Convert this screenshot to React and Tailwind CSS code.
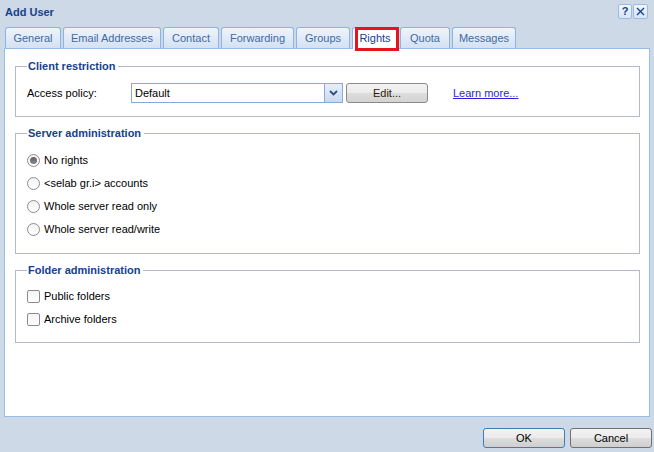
import React from "react";

function Radio({ checked }) {
  return (
    <span className="w-[13px] h-[13px] rounded-full border border-[#8c8c8c] bg-gradient-to-b from-[#f2f2f2] to-[#ffffff] flex items-center justify-center shrink-0">
      {checked && <span className="w-[7px] h-[7px] rounded-full bg-gradient-to-b from-[#5f5f5f] to-[#8a8a8a]" />}
    </span>
  );
}

function Check() {
  return <span className="w-[13px] h-[13px] rounded-[2px] border border-[#8c8c8c] bg-gradient-to-b from-[#f4f4f4] to-white shrink-0" />;
}

function Fieldset({ title, children, className }) {
  return (
    <fieldset className={"border border-[#b5b8c8] pl-[11px] pr-[10px] " + className}>
      <legend className="pl-[1px] pr-[3px] leading-[13px] font-bold text-[#15428b]">{title}</legend>
      {children}
    </fieldset>
  );
}

const tabs = [
  ["General", "w-[56px]"],
  ["Email Addresses", "w-[98px]"],
  ["Contact", "w-[56px]"],
  ["Forwarding", "w-[73px]"],
  ["Groups", "w-[54px]"],
  ["Rights", "w-[46px]"],
  ["Quota", "w-[50px]"],
  ["Messages", "w-[64px]"],
];

export default function App() {
  return (
    <div className="w-[654px] h-[452px] bg-[#ced9e7] flex flex-col overflow-hidden text-[11px] text-black font-['Liberation_Sans',Arial,sans-serif]">
      {/* title bar */}
      <div className="h-[27px] flex items-start justify-between pl-[5px] pr-[6px] pt-[4px] shrink-0">
        <span className="font-bold text-[#15428b] leading-[14px] pt-[1px]">Add User</span>
        <div className="flex gap-[1px]">
          <span className="w-[14px] h-[15px] border border-[#99bbe8] rounded-[2px] bg-gradient-to-b from-[#f1f6fc] to-[#d7e4f5] flex items-center justify-center text-[#15428b] font-bold text-[11px] leading-none">?</span>
          <span className="w-[15px] h-[15px] border border-[#99bbe8] rounded-[2px] bg-gradient-to-b from-[#f1f6fc] to-[#d7e4f5] flex items-center justify-center">
            <svg width="9" height="9" viewBox="0 0 9 9"><path d="M1 1 L8 8 M8 1 L1 8" stroke="#15428b" strokeWidth="1.4" /></svg>
          </span>
        </div>
      </div>
      {/* tabs */}
      <div className="h-[21px] flex items-end gap-[2px] pl-[5px] shrink-0 relative z-10">
        {tabs.map(([t, w]) =>
          t === "Rights" ? (
            <div key={t} className={w + " h-[22px] -mb-px relative bg-white border border-b-0 border-[#8db2e3] rounded-t-[3px] flex items-center justify-center text-[#15428b]"}>
              <span className="pb-[1px]">{t}</span>
              <span className="absolute left-[2px] right-[-2px] top-[-1px] bottom-[-2px] border-[3px] border-[#e8141c]" />
            </div>
          ) : (
            <div key={t} className={w + " h-[21px] bg-gradient-to-b from-[#eef4fb] to-[#d4e1f2] border border-b-0 border-[#8db2e3] rounded-t-[3px] flex items-center justify-center text-[#416aa3]"}>
              {t}
            </div>
          )
        )}
      </div>
      {/* panel */}
      <div className="mx-[4px] h-[369px] border border-[#99bbe8] bg-white shrink-0 pt-[11px] pl-[10px] pr-[9px] flex flex-col gap-[10px]">
        <Fieldset title="Client restriction" className="pt-[10px] pb-[13px]">
          <div className="flex items-center h-[20px]">
            <span className="w-[104px]">Access policy:</span>
            <div className="w-[212px] h-[20px] border border-[#86a9dd] flex">
              <span className="flex-1 pl-[3px] flex items-center">Default</span>
              <span className="w-[18px] h-full border-l border-[#86a9dd] bg-gradient-to-b from-[#e6effb] to-[#c7daf3] flex items-center justify-center">
                <svg width="9" height="6" viewBox="0 0 9 6"><path d="M1 1 L4.5 4.5 L8 1" fill="none" stroke="#2d4e84" strokeWidth="1.8" /></svg>
              </span>
            </div>
            <button className="ml-[3px] w-[82px] h-[20px] rounded-[3px] border border-[#8a8a8a] bg-[linear-gradient(#f3f3f3_0%,#ebebeb_50%,#dddddd_50%,#d3d3d3_100%)] text-[#2a1a0a] text-[11px] leading-none">
              Edit...
            </button>
            <a className="ml-[25px] text-[#2a1ee0] underline">Learn more...</a>
          </div>
        </Fieldset>
        <Fieldset title="Server administration" className="pt-[9px] pb-[12px]">
          {[
            ["No rights", true],
            ["<selab gr.i> accounts", false],
            ["Whole server read only", false],
            ["Whole server read/write", false],
          ].map(([t, c]) => (
            <div key={t} className="h-[23px] flex items-center gap-[4px]">
              <Radio checked={c} />
              <span>{t}</span>
            </div>
          ))}
        </Fieldset>
        <Fieldset title="Folder administration" className="pt-[8px] pb-[11px]">
          {["Public folders", "Archive folders"].map((t) => (
            <div key={t} className="h-[23px] flex items-center gap-[4px]">
              <Check />
              <span>{t}</span>
            </div>
          ))}
        </Fieldset>
      </div>
      {/* buttons */}
      <div className="flex justify-end gap-[5px] pr-[2px] mt-[11px]">
        <button className="w-[82px] h-[20px] rounded-[3px] border border-[#3c7fb1] bg-[linear-gradient(#f2f2f2_0%,#ebebeb_50%,#dddddd_50%,#cfcfcf_100%)] text-[11px] text-black leading-none">
          OK
        </button>
        <button className="w-[82px] h-[20px] rounded-[3px] border border-[#707070] bg-[linear-gradient(#f2f2f2_0%,#ebebeb_50%,#dddddd_50%,#cfcfcf_100%)] text-[11px] text-black leading-none">
          Cancel
        </button>
      </div>
    </div>
  );
}
